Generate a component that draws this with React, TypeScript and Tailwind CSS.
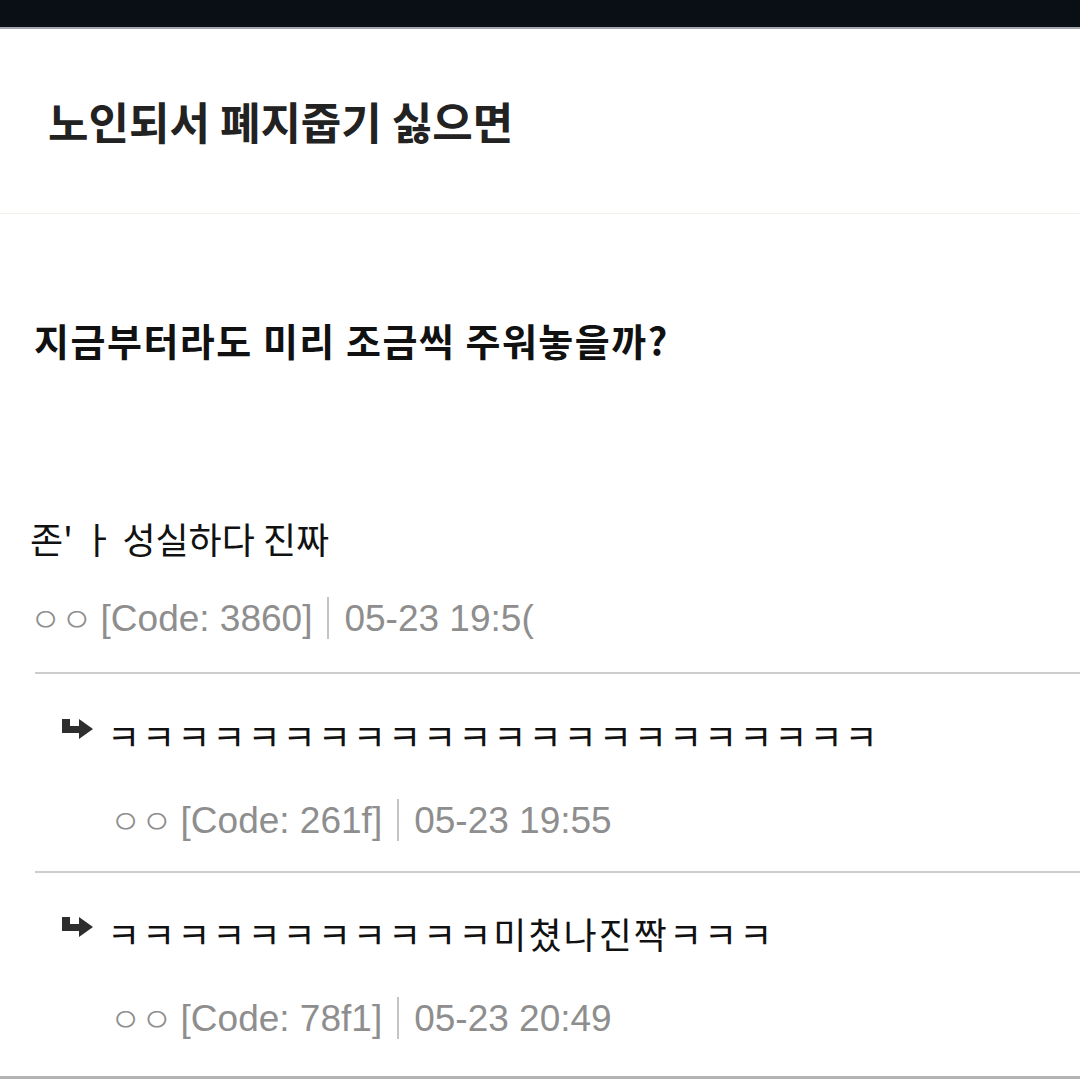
const ko = { fontFamily: '"Noto Sans CJK KR", "Noto Sans", sans-serif' };
const meta = { fontFamily: '"Liberation Sans", "Noto Sans CJK KR", sans-serif' };

function ReplyArrow() {
  return (
    <svg width="31" height="20" viewBox="0 0 31 20" className="mb-[12px] shrink-0">
      <path d="M0 0 H8 V7 H17 V0 L31 10 L17 20 V14 H0 Z" fill="#2e2e2e" />
    </svg>
  );
}

function Meta({ code, time }: { code: string; time: string }) {
  return (
    <div className="flex h-[44px] items-center text-[37px] leading-none text-[#8e8e8e]" style={meta}>
      <span className="mr-[8px] text-[34px] font-light" style={ko}>ㅇㅇ</span>
      <span>[Code: {code}]</span>
      <span className="mx-[15px] h-[42px] w-[2px] bg-[#c4c4c4]" />
      <span>{time}</span>
    </div>
  );
}

export default function App() {
  return (
    <div className="flex h-[1080px] w-[1080px] flex-col overflow-hidden bg-white">
      <div className="h-[27px] bg-[#0a0f16]" />
      <div className="h-[2px] bg-[#a3a8ae]" />

      <div className="flex h-[184px] items-center pl-[48px]">
        <h1 className="text-[44px] font-bold leading-none text-[#222]" style={ko}>
          노인되서 폐지줍기 싫으면
        </h1>
      </div>
      <div className="h-[1px] bg-[#f3f3ec]" />

      <div className="h-[256px] pl-[34px] pt-[104px]">
        <p className="text-[38px] font-bold leading-[44px] tracking-[1.5px] text-[#111]" style={ko}>
          지금부터라도 미리 조금씩 주워놓을까?
        </p>
      </div>

      <div className="pl-[30px] pt-[46px]">
        <p className="h-[44px] text-[36px] leading-[44px] text-[#111]" style={ko}>
          존' ㅏ 성실하다 진짜
        </p>
        <div className="mt-[36px]">
          <Meta code="3860" time="05-23 19:5(" />
        </div>
      </div>

      <div className="ml-[35px] mt-[32px] h-[2px] bg-[#cdcdcd]" />

      <div className="pt-[39px]">
        <div className="flex h-[44px] items-center pl-[62px]">
          <ReplyArrow />
          <p className="ml-[14px] text-[36px] leading-[44px] tracking-[2px] text-[#111]" style={ko}>
            ㅋㅋㅋㅋㅋㅋㅋㅋㅋㅋㅋㅋㅋㅋㅋㅋㅋㅋㅋㅋㅋㅋ
          </p>
        </div>
        <div className="mt-[41px] pl-[110px]">
          <Meta code="261f" time="05-23 19:55" />
        </div>
      </div>

      <div className="ml-[35px] mt-[29px] h-[2px] bg-[#cdcdcd]" />

      <div className="pt-[38px]">
        <div className="flex h-[44px] items-center pl-[62px]">
          <ReplyArrow />
          <p className="ml-[14px] text-[36px] leading-[44px] tracking-[2px] text-[#111]" style={ko}>
            ㅋㅋㅋㅋㅋㅋㅋㅋㅋㅋㅋ미쳤나진짝ㅋㅋㅋ
          </p>
        </div>
        <div className="mt-[41px] pl-[110px]">
          <Meta code="78f1" time="05-23 20:49" />
        </div>
      </div>

      <div className="mt-[36px] h-[3px] bg-[#b4b4b4]" />
    </div>
  );
}
